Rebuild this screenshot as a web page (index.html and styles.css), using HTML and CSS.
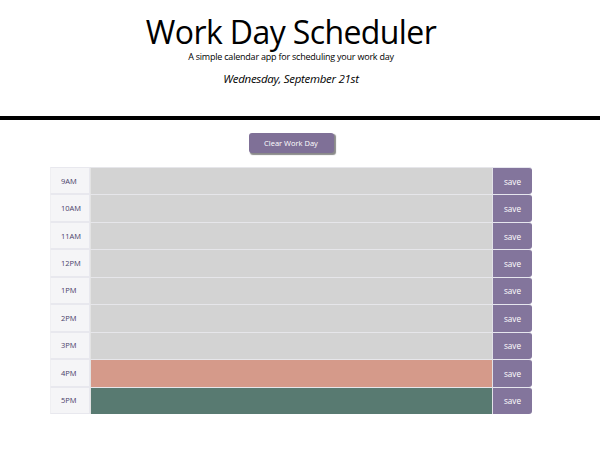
FILE: index.html
```html
<!DOCTYPE html>
<html lang="en">
<head>
<meta charset="utf-8">
<title>Work Day Scheduler</title>
<link rel="stylesheet" href="styles.css">
</head>
<body>
<header class="header">
  <div class="header-inner">
    <h1 class="title">Work Day Scheduler</h1>
    <p class="lead">A simple calendar app for scheduling your work day</p>
    <p class="current-day">Wednesday, September 21st</p>
  </div>
</header>
<main class="main">
  <div class="clear-wrap"><button class="clear-btn">Clear Work Day</button></div>
  <div class="schedule">
    <div class="row"><div class="hour">9AM</div><textarea class="desc past"></textarea><button class="save">save</button></div>
    <div class="row"><div class="hour">10AM</div><textarea class="desc past"></textarea><button class="save">save</button></div>
    <div class="row"><div class="hour">11AM</div><textarea class="desc past"></textarea><button class="save">save</button></div>
    <div class="row"><div class="hour">12PM</div><textarea class="desc past"></textarea><button class="save">save</button></div>
    <div class="row"><div class="hour">1PM</div><textarea class="desc past"></textarea><button class="save">save</button></div>
    <div class="row"><div class="hour">2PM</div><textarea class="desc past"></textarea><button class="save">save</button></div>
    <div class="row"><div class="hour">3PM</div><textarea class="desc past"></textarea><button class="save">save</button></div>
    <div class="row"><div class="hour">4PM</div><textarea class="desc present"></textarea><button class="save">save</button></div>
    <div class="row"><div class="hour">5PM</div><textarea class="desc future"></textarea><button class="save">save</button></div>
  </div>
</main>
</body>
</html>
```
FILE: styles.css
```css
* { box-sizing: border-box; }
html, body { margin: 0; padding: 0; background: #fff; }
body { font-family: "Open Sans", "DejaVu Sans", sans-serif; color: #000; }

.header { border-bottom: 4px solid #000; padding: 12.5px 0 29.5px; }
.header-inner { width: 582px; text-align: center; }
.title { margin: 0; font-size: 32px; font-weight: 400; line-height: 38px; letter-spacing: -0.6px; }
.lead { margin: 0; font-size: 9px; line-height: 12px; letter-spacing: -0.22px; }
.current-day { margin: 8px 0 0; font-size: 11.5px; font-style: italic; line-height: 16px; letter-spacing: -0.3px; }

.main { width: 582px; }
.clear-wrap { display: flex; justify-content: center; padding-top: 13px; }
.clear-btn {
  width: 85px; height: 20px; border: 0; border-radius: 3px;
  background: #7f7097; color: #fff; font-family: inherit; font-size: 7.5px;
  box-shadow: 1.5px 1.5px 1px #8a8a8a; padding: 0;
}

.schedule { margin: 14px 50px 0; display: flex; flex-direction: column; }
.row { display: flex; height: 27.45px; }
.hour {
  width: 40px; background: #f5f5f7; border: 1px solid #e8e8ee; border-left-color: #efeff2;
  color: #4a3f6b; font-size: 7.5px; display: flex; align-items: center; padding-left: 10px;
}
.desc {
  flex: 1; border: 0; border-top: 1px solid #e6e6ea; border-left: 1px solid #e3e3e3; margin: 0; resize: none; padding: 0;
}
.past { background: #d3d3d3; }
.present { background: #d59a8a; }
.future { background: #587a71; }
.save {
  width: 40px; border: 0; border-top: 1px solid #e6e6ee; border-left: 1px solid #e2e2e8; border-radius: 0 3px 3px 0;
  background: #83759c; color: #fff; font-family: inherit; font-size: 8.2px; padding: 0;
}
```
